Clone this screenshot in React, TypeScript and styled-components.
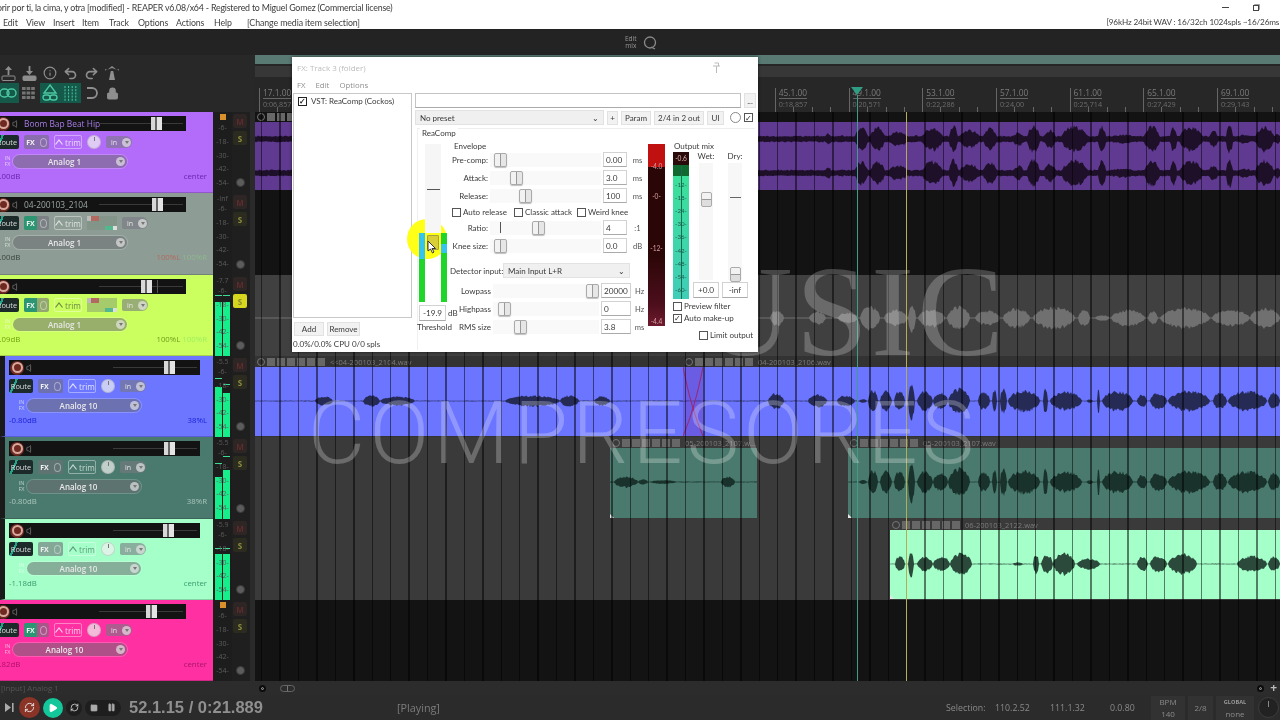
import React, {FC, useMemo} from 'react';
import styled, {createGlobalStyle} from 'styled-components';
import {Info, Lock, Pause, Play, Redo2, RefreshCw, Square, Undo2, Volume} from 'lucide-react';

const UI_FONT = `'Open Sans', 'Noto Sans', sans-serif`;
const CHROME_FONT = `Lato, 'Open Sans', sans-serif`;
const FX_FONT = `Lato, 'Liberation Sans', Arial, sans-serif`;

const GlobalStyle = createGlobalStyle`
    html, body {
        margin: 0;
        background: #222;
    }
    * {
        box-sizing: border-box;
    }
`;

const Page = styled.div`
    position: relative;
    display: flex;
    flex-direction: column;
    width: 1280px;
    height: 720px;
    overflow: hidden;
    background: #262626;
    font-family: ${UI_FONT};
    font-size: 9px;
    filter: blur(0.35px);
`;

/* ---- window chrome ---- */

const TitleBar = styled.div`
    display: flex;
    align-items: center;
    height: 15px;
    background: #fff;
    color: #3a3a3a;
    font-family: ${CHROME_FONT};
    font-size: 8.8px;
    letter-spacing: -0.18px;
    white-space: nowrap;
`;
const TitleText = styled.span`
    margin-left: -3px;
`;
const WindowButtons = styled.div`
    display: flex;
    gap: 24px;
    align-items: center;
    margin-left: auto;
    margin-right: 21px;
`;
const MinimizeGlyph = styled.span`
    width: 7px;
    height: 1px;
    background: #444;
`;
const RestoreGlyph = styled.span`
    width: 6px;
    height: 6px;
    border: 1px solid #444;
    box-shadow: 1px -1px 0 -0.2px #888;
`;
const MenuBar = styled.div`
    display: flex;
    align-items: center;
    height: 15px;
    padding-left: 3px;
    background: #fff;
    color: #3f3f3f;
    font-family: ${CHROME_FONT};
    font-size: 8.8px;
    letter-spacing: -0.1px;
    border-bottom: 1px solid #222;
    white-space: nowrap;
`;
const MenuItem = styled.span<{$width: number}>`
    width: ${p => p.$width}px;
    flex: none;
`;
const AudioStatus = styled.span`
    margin-left: auto;
    margin-right: -3px;
    font-size: 8.2px;
    letter-spacing: -0.15px;
`;
const TopStrip = styled.div`
    display: flex;
    align-items: center;
    height: 25px;
    padding-left: 625px;
    gap: 6px;
    background: #232323;
`;
const EditMix = styled.span`
    color: #999;
    font-size: 6.5px;
    line-height: 6.5px;
    text-align: center;
`;
const Main = styled.div`
    display: flex;
    height: 626px;
`;

/* ---- track control panel ---- */

const LeftPanel = styled.div`
    display: flex;
    flex-direction: column;
    width: 255px;
    flex: none;
    background: #1f1f1f;
`;
const ToolbarArea = styled.div`
    display: grid;
    grid-template-columns: repeat(6, 20.8px);
    grid-auto-rows: 20px;
    align-content: start;
    height: 57px;
    padding-top: 8px;
    margin-left: -2px;
    background: #282828;
    color: #8e8e8e;
`;
const ToolButton = styled.div<{$active?: boolean}>`
    display: flex;
    align-items: center;
    justify-content: center;
    height: 20px;
    background: ${p => (p.$active ? '#14594a' : 'transparent')};
    color: ${p => (p.$active ? '#4cc7a1' : 'inherit')};
`;
const TrackRow = styled.div<{$height: number}>`
    display: flex;
    height: ${p => p.$height}px;
    flex: none;
`;
const TrackHeader = styled.div<{$color: string; $indent: boolean}>`
    width: 213px;
    flex: none;
    overflow: hidden;
    background: ${p => p.$color};
    border-left: ${p => (p.$indent ? '5px solid #1a1a1a' : 'none')};
    border-bottom: 1px solid rgba(0, 0, 0, 0.18);
    padding-left: ${p => (p.$indent ? 4 : 0)}px;
`;
const TrackContent = styled.div<{$indent: boolean}>`
    display: flex;
    flex-direction: column;
    padding-top: 4px;
    margin-left: ${p => (p.$indent ? 0 : -5)}px;
    margin-right: 6px;
`;
const FaderBar = styled.div`
    position: relative;
    display: flex;
    align-items: center;
    gap: 2px;
    width: 191px;
    height: 15px;
    flex: none;
    padding-left: 1px;
    background: #131313;
`;
const RecButton = styled.span`
    width: 14px;
    height: 14px;
    flex: none;
    border-radius: 50%;
    background: #6e2a20;
    display: flex;
    align-items: center;
    justify-content: center;
    &::after {
        content: '';
        width: 7px;
        height: 7px;
        border-radius: 50%;
        border: 2px solid #d9a9a0;
    }
`;
const TrackName = styled.span<{$color: string}>`
    color: ${p => p.$color};
    font-size: 8.4px;
    white-space: nowrap;
`;
const FaderRail = styled.span`
    position: absolute;
    right: 3px;
    top: 7px;
    width: 84px;
    height: 1px;
    background: #3a3a3a;
`;
const FaderThumb = styled.span<{$pos: number}>`
    position: absolute;
    left: ${p => p.$pos}px;
    top: 1px;
    width: 11px;
    height: 13px;
    background: linear-gradient(90deg, #d8d8d8 0 40%, #666 40% 55%, #e4e4e4 55%);
`;
const FaderMark = styled.span`
    position: absolute;
    left: 162px;
    top: 1px;
    width: 1px;
    height: 13px;
    background: #555;
`;
const ControlRow = styled.div`
    display: flex;
    align-items: center;
    gap: 5px;
    height: 14px;
    margin-top: 4px;
    flex: none;
`;
const RouteButton = styled.span`
    display: flex;
    align-items: center;
    justify-content: center;
    width: 24px;
    height: 14px;
    flex: none;
    background: linear-gradient(115deg, #1c2b2a 0 22%, #25a38a 22% 30%, #1c2b2a 30%);
    color: #ddd;
    font-size: 7.4px;
    border-radius: 2px;
`;
const FxButton = styled.span<{$on: boolean}>`
    display: flex;
    width: 25px;
    height: 14px;
    flex: none;
    color: #f2f2f2;
    font-size: 7px;
    font-weight: 700;
    background: rgba(110, 110, 120, 0.6);
    border-radius: 2px;
    overflow: hidden;
    & > span:first-child {
        display: flex;
        align-items: center;
        justify-content: center;
        width: 13px;
        background: ${p => (p.$on ? '#2c9672' : 'transparent')};
    }
    & > span:last-child {
        flex: 1;
        margin: 2.5px;
        border-radius: 50%;
        border: 1px solid rgba(255, 255, 255, 0.4);
    }
`;
const TrimButton = styled.span<{$color: string}>`
    display: flex;
    align-items: center;
    gap: 2px;
    justify-content: center;
    width: 28px;
    height: 14px;
    flex: none;
    border: 1px solid rgba(255, 255, 255, 0.4);
    border-radius: 2px;
    color: ${p => p.$color};
    font-size: 8.2px;
`;
const Knob = styled.span`
    position: relative;
    width: 14px;
    height: 14px;
    flex: none;
    border-radius: 50%;
    background: rgba(240, 240, 240, 0.72);
    border: 1px solid rgba(0, 0, 0, 0.12);
    &::after {
        content: '';
        position: absolute;
        left: 5.5px;
        top: 1px;
        width: 1px;
        height: 4px;
        background: #777;
    }
`;
const DualPan = styled.span`
    display: flex;
    flex-direction: column;
    justify-content: center;
    gap: 5px;
    width: 30px;
    height: 14px;
    flex: none;
    background: rgba(120, 140, 120, 0.45);
    &::before {
        content: '';
        width: 12px;
        height: 5px;
        background: linear-gradient(90deg, #bbb 0 30%, #b26a60 30%);
    }
    &::after {
        content: '';
        align-self: flex-end;
        width: 12px;
        height: 5px;
        background: linear-gradient(90deg, #54b88e 0 70%, #ddd 70%);
    }
`;
const InBadge = styled.span`
    display: flex;
    align-items: center;
    justify-content: space-between;
    width: 26px;
    height: 12px;
    flex: none;
    padding: 0 1px 0 5px;
    background: rgba(120, 120, 130, 0.6);
    border-radius: 2px 7px 7px 2px;
    color: #e4e4e4;
    font-size: 7px;
`;
const DownDot = styled.span`
    display: flex;
    align-items: center;
    justify-content: center;
    width: 9px;
    height: 9px;
    flex: none;
    border-radius: 50%;
    background: rgba(235, 235, 235, 0.65);
    &::after {
        content: '';
        border: 2.5px solid transparent;
        border-top: 3.5px solid #777;
        margin-top: 3px;
    }
`;
const InputRow = styled.div`
    display: flex;
    align-items: center;
    height: 14px;
    margin-top: 5px;
    flex: none;
`;
const InFxTag = styled.span`
    width: 11px;
    flex: none;
    margin-left: 7px;
    color: rgba(255, 255, 255, 0.6);
    font-size: 5.5px;
    line-height: 6px;
    text-align: center;
`;
const InputPill = styled.span`
    display: flex;
    align-items: center;
    width: 114px;
    height: 13px;
    padding-right: 2px;
    border-radius: 7px;
    background: rgba(110, 110, 115, 0.55);
    box-shadow: 0 0 0 1px rgba(255, 255, 255, 0.2);
    color: #e8e8e8;
    font-size: 8px;
    font-weight: 600;
    & > span:first-child {
        flex: 1;
        text-align: center;
    }
`;
const ReadoutRow = styled.div`
    display: flex;
    justify-content: space-between;
    gap: 3px;
    margin-top: 3px;
    font-size: 7.8px;
`;
const Readout = styled.span<{$color: string}>`
    color: ${p => p.$color};
`;
const MeterCell = styled.div`
    position: relative;
    display: flex;
    flex-direction: column;
    align-items: center;
    width: 19px;
    flex: none;
    background: #1d1d1d;
    overflow: hidden;
`;
const MeterTop = styled.span`
    position: relative;
    z-index: 1;
    display: flex;
    align-items: center;
    justify-content: center;
    height: 8px;
    margin-top: 1px;
    color: #5a5a5a;
    font-size: 7px;
`;
const MeterLabel = styled.span`
    position: relative;
    z-index: 1;
    display: flex;
    align-items: center;
    height: 13.7px;
    flex: none;
    color: #5d5d5d;
    font-size: 7px;
`;
const ClipSquare = styled.span`
    width: 6px;
    height: 6px;
    background: #d8902c;
`;
const MeterBar = styled.span<{$side: 'left' | 'right'; $top: number}>`
    position: absolute;
    ${p => p.$side}: 2px;
    top: ${p => p.$top}px;
    bottom: 0;
    width: 7px;
    background: #16ee8c;
`;
const MeterTick = styled.span<{$side: 'left' | 'right'; $top: number}>`
    position: absolute;
    ${p => p.$side}: 2px;
    top: ${p => p.$top}px;
    width: 7px;
    height: 1px;
    background: #3bdc94;
`;
const MuteColumn = styled.div`
    display: flex;
    flex-direction: column;
    align-items: flex-start;
    gap: 3px;
    width: 23px;
    flex: none;
    padding: 2px 0 6px 1px;
    background: #1f1f1f;
    border-right: 5px solid #2a2a2a;
`;
const MuteButton = styled.span<{$tone: 'mute' | 'solo' | 'soloOn'}>`
    display: flex;
    align-items: center;
    justify-content: center;
    width: 14px;
    height: 14px;
    border-radius: 2px;
    font-size: 8px;
    font-weight: 700;
    background: ${p => (p.$tone === 'soloOn' ? '#d6d61e' : p.$tone === 'solo' ? '#2b2b20' : '#2e2525')};
    color: ${p => (p.$tone === 'soloOn' ? '#8a8a30' : p.$tone === 'solo' ? '#8d8d3e' : '#5e2c2c')};
`;
const PhaseButton = styled.span`
    width: 9px;
    height: 9px;
    margin: auto 0 0 2.5px;
    border-radius: 50%;
    background: #5c5c5c;
    border: 1.5px solid #3a3a3a;
`;

/* ---- arrange view ---- */

const Arrange = styled.div`
    position: relative;
    display: flex;
    flex-direction: column;
    flex: 1;
    min-width: 0;
    overflow: hidden;
`;
const TealStrip = styled.div`
    height: 9px;
    flex: none;
    background: #587a72;
`;
const ScrollStrip = styled.div`
    height: 11px;
    margin-top: 2px;
    flex: none;
    background: #373737;
`;
const Ruler = styled.div`
    display: flex;
    height: 35px;
    flex: none;
    padding: 11px 0 0 4px;
    background: #272727;
`;
const RulerMark = styled.div`
    width: 73.7px;
    height: 24px;
    flex: none;
    padding: 0 0 0 3px;
    border-left: 1px solid #666;
    background: repeating-linear-gradient(90deg, transparent 0 17.43px, #666 17.43px 18.43px) bottom left / 100% 5px no-repeat;
`;
const BarLabel = styled.div`
    width: fit-content;
    color: #7b7b7b;
    font-size: 8.4px;
    line-height: 10px;
    border-bottom: 1px solid #666;
`;
const TimeLabel = styled.div`
    color: #6c6c6c;
    font-size: 7.2px;
    line-height: 10px;
`;
const Lanes = styled.div`
    position: relative;
    flex: 1;
`;
const Lane = styled.div<{$height: number; $bg: string}>`
    position: relative;
    height: ${p => p.$height}px;
    background: ${p => p.$bg};
`;
const Clip = styled.div<{$left: number; $width: number}>`
    position: absolute;
    top: 0;
    left: ${p => p.$left}px;
    width: ${p => p.$width}px;
    display: flex;
    flex-direction: column;
`;
const ClipHeader = styled.div<{$height: number}>`
    display: flex;
    align-items: center;
    height: ${p => p.$height}px;
    padding-left: 2px;
    color: #7c7c7c;
    font-size: 7.5px;
    white-space: nowrap;
`;
const ClipPower = styled.span`
    width: 8px;
    height: 8px;
    margin-right: 2px;
    flex: none;
    border-radius: 50%;
    border: 1px solid #777;
`;
const ClipBox = styled.span`
    width: 8px;
    height: 8px;
    margin-right: 2px;
    flex: none;
    background: #676767;
`;
const ClipName = styled.span`
    margin-left: 3px;
`;
const ClipBody = styled.div<{$height: number; $color: string; $corner?: boolean}>`
    position: relative;
    height: ${p => p.$height}px;
    background: ${p => p.$color};
    ${p =>
        p.$corner &&
        `&::after {
            content: '';
            position: absolute;
            left: 0;
            bottom: 0;
            border: 2.5px solid transparent;
            border-left-color: #e8e8e8;
            border-bottom-color: #e8e8e8;
        }`}
`;
const WaveSvg = styled.svg`
    display: block;
    width: 100%;
    height: 100%;
`;
const Crossfade = styled.svg`
    position: absolute;
    left: 428px;
    top: 11px;
`;
const GridLines = styled.div`
    position: absolute;
    inset: 0;
    pointer-events: none;
    background: repeating-linear-gradient(90deg, rgba(0, 0, 0, 0.5) 0 1.4px, transparent 1.4px 18.43px) 6px 0;
`;
const Cursor = styled.div<{$left: number; $top: number; $color: string}>`
    position: absolute;
    top: ${p => p.$top}px;
    bottom: 0;
    left: ${p => p.$left}px;
    width: 1px;
    background: ${p => p.$color};
`;
const PlayheadCap = styled.div`
    position: absolute;
    top: 32px;
    left: 596px;
    border: 6px solid transparent;
    border-top: 8px solid #2f9d82;
    border-bottom: 0;
`;

/* ---- watermark ---- */

const Watermark = styled.div<{$serif?: boolean}>`
    position: absolute;
    white-space: nowrap;
    pointer-events: none;
    ${p =>
        p.$serif
            ? `right: 273px; top: 236px; color: rgba(255, 255, 255, 0.22); font: 400 130px 'Liberation Serif', serif; line-height: 150px; letter-spacing: 3px;`
            : `left: 308px; top: 378px; color: rgba(255, 255, 255, 0.25); font: 300 88px Roboto, sans-serif; line-height: 110px; letter-spacing: 4.3px;`}
`;

/* ---- FX window ---- */

const FxWindow = styled.div`
    position: absolute;
    left: 292px;
    top: 57px;
    display: flex;
    flex-direction: column;
    width: 466px;
    height: 295px;
    background: #fff;
    color: #3a3a3a;
    font-family: ${FX_FONT};
    font-size: 8px;
    box-shadow: 0 0 3px rgba(0, 0, 0, 0.6);
`;
const FxTitle = styled.div`
    display: flex;
    align-items: center;
    justify-content: space-between;
    height: 20px;
    flex: none;
    padding: 0 37px 0 5px;
    color: #bcbcbc;
    font-family: ${UI_FONT};
    font-size: 8px;
`;
const FxMenu = styled.div`
    display: flex;
    gap: 10px;
    align-items: center;
    height: 15px;
    flex: none;
    padding-left: 5px;
    color: #8f8f8f;
    font-family: ${UI_FONT};
    font-size: 7.8px;
`;
const FxBody = styled.div`
    display: flex;
    flex: 1;
    padding: 1px 0 0 1px;
`;
const FxListColumn = styled.div`
    display: flex;
    flex-direction: column;
    width: 119px;
    flex: none;
`;
const FxList = styled.div`
    height: 225px;
    flex: none;
    padding: 2px 4px;
    border: 1px solid #c8c8c8;
`;
const FxListItem = styled.div`
    display: flex;
    align-items: center;
    gap: 4px;
    white-space: nowrap;
`;
const CheckBox = styled.span<{$strong?: boolean}>`
    display: inline-flex;
    align-items: center;
    justify-content: center;
    width: 9px;
    height: 9px;
    flex: none;
    border: 1px solid ${p => (p.$strong ? '#222' : '#555')};
    color: #222;
    font-size: 8px;
    line-height: 8px;
    font-weight: ${p => (p.$strong ? 700 : 400)};
    background: #fff;
`;
const FxListButtons = styled.div`
    display: flex;
    gap: 3px;
    margin-top: 4px;
    padding-left: 1px;
`;
const PlainButton = styled.span<{$width: number; $height?: number}>`
    display: flex;
    align-items: center;
    justify-content: center;
    width: ${p => p.$width}px;
    height: ${p => p.$height ?? 14}px;
    flex: none;
    background: #f2f2f2;
    border: 1px solid #e2e2e2;
    white-space: nowrap;
`;
const CpuText = styled.div`
    margin-top: 3px;
    white-space: nowrap;
`;
const FxMain = styled.div`
    display: flex;
    flex-direction: column;
    flex: 1;
    min-width: 0;
    padding-left: 3px;
`;
const PresetNameRow = styled.div`
    display: flex;
    gap: 3px;
    height: 15px;
`;
const PresetName = styled.div`
    width: 326px;
    flex: none;
    border: 1px solid #c4c4c4;
    border-bottom-color: #aaa;
`;
const PresetToolbar = styled.div`
    display: flex;
    align-items: center;
    gap: 3px;
    height: 15px;
    margin-top: 2px;
`;
const SelectBox = styled.span<{$width: number}>`
    display: flex;
    align-items: center;
    justify-content: space-between;
    width: ${p => p.$width}px;
    height: 15px;
    flex: none;
    padding: 0 4px;
    background: #f0f0f0;
    border: 1px solid #e2e2e2;
    white-space: nowrap;
`;
const MiniKnob = styled.span`
    width: 11px;
    height: 11px;
    margin-left: 3px;
    flex: none;
    border-radius: 50%;
    border: 1px solid #888;
`;
const PluginPanel = styled.div`
    position: relative;
    display: flex;
    width: 338px;
    height: 222px;
    margin: 3px 0 0 2px;
    padding: 11px 0 0 1px;
    border-top: 1px solid #eee;
    border-left: 1px solid #f0f0f0;
`;
const PanelTitle = styled.span`
    position: absolute;
    top: -1px;
    left: 2px;
    padding: 0 2px;
    background: #fff;
`;
const ThresholdColumn = styled.div`
    position: relative;
    z-index: 2;
    display: flex;
    flex-direction: column;
    width: 28px;
    flex: none;
    margin-top: 4px;
`;
const ThresholdMeter = styled.div`
    position: relative;
    display: flex;
    align-items: flex-end;
    height: 158px;
    flex: none;
`;
const Highlight = styled.span`
    position: absolute;
    left: -12px;
    top: 75px;
    width: 40px;
    height: 40px;
    border-radius: 50%;
    background: #ffff17;
`;
const ThresholdBar = styled.span<{$fill: string}>`
    position: relative;
    width: 6px;
    height: 69px;
    flex: none;
    background: ${p => p.$fill};
`;
const ThresholdTrough = styled.span`
    position: relative;
    flex: 1;
    align-self: stretch;
    &::before {
        content: '';
        position: absolute;
        inset: 0 0 69px 0;
        background: #f6f6f6;
    }
    &::after {
        content: '';
        position: absolute;
        left: 2px;
        right: 1px;
        top: 45px;
        height: 1px;
        background: #555;
    }
`;
const ThresholdThumb = styled.span`
    position: absolute;
    left: 2px;
    right: 2px;
    top: 91px;
    height: 15px;
    background: #d8cf38;
    border: 1px solid #a8a040;
    border-radius: 1px;
`;
const CursorArrow = styled.svg`
    position: absolute;
    left: 8px;
    top: 96px;
`;
const ThresholdValue = styled.div`
    display: flex;
    align-items: center;
    gap: 2px;
    margin-top: 3px;
    white-space: nowrap;
`;
const ValueBox = styled.span<{$width: number; $center?: boolean; $height?: number}>`
    display: flex;
    align-items: center;
    justify-content: ${p => (p.$center ? 'center' : 'flex-start')};
    width: ${p => p.$width}px;
    height: ${p => p.$height ?? 15}px;
    flex: none;
    padding: 0 2px;
    border: 1px solid #d2d2d2;
    border-bottom-color: #aaa;
    background: #fff;
    font-size: 8.2px;
`;
const ThresholdLabel = styled.div`
    margin: 1px 0 0 -2px;
    white-space: nowrap;
`;
const MainColumn = styled.div`
    display: flex;
    flex-direction: column;
    width: 195px;
    flex: none;
    margin-left: 3px;
`;
const EnvelopeTitle = styled.div`
    height: 12px;
    padding: 1px 0 0 4px;
`;
const ParamRow = styled.div<{$label: number; $track: number}>`
    display: grid;
    grid-template-columns: ${p => p.$label}px ${p => p.$track}px auto auto;
    align-items: center;
    column-gap: 2px;
    height: 15px;
    margin-bottom: 3px;
`;
const ParamLabel = styled.span`
    text-align: right;
    white-space: nowrap;
`;
const SliderTrack = styled.span`
    position: relative;
    height: 14px;
    background: #f9f9f9;
`;
const SliderThumb = styled.span<{$pos: number}>`
    position: absolute;
    left: ${p => p.$pos - 6}px;
    top: 0;
    width: 13px;
    height: 14px;
    border: 1px solid #aaa;
    border-radius: 2px;
    background: linear-gradient(90deg, #f2f2f2 0 48%, #999 48% 56%, #e6e6e6 56%);
    box-shadow: 0 1px 1px rgba(0, 0, 0, 0.25);
`;
const RatioTick = styled.span`
    position: absolute;
    left: 10px;
    top: 1px;
    width: 1px;
    height: 11px;
    background: #555;
`;
const Unit = styled.span`
    margin-left: 1px;
    font-size: 7.6px;
    color: #555;
`;
const ChecksRow = styled.div`
    display: flex;
    align-items: center;
    height: 14px;
    margin: -1px 0 1px 2px;
`;
const CheckLabel = styled.label<{$width?: number}>`
    display: flex;
    align-items: center;
    gap: 2px;
    height: 12px;
    ${p => (p.$width ? `width: ${p.$width}px; flex: none;` : '')}
    white-space: nowrap;
`;
const DetectorRow = styled.div`
    display: flex;
    align-items: center;
    height: 15px;
    margin: 7px 0 5px;
`;
const DetectorLabel = styled.span`
    width: 53px;
    flex: none;
    white-space: nowrap;
`;
const ReductionMeter = styled.div`
    position: relative;
    display: flex;
    flex-direction: column;
    align-items: center;
    justify-content: space-between;
    width: 17px;
    height: 182px;
    flex: none;
    margin: 4px 0 0 3px;
    color: #d8a0a0;
    font-size: 6.6px;
    background: linear-gradient(#c11010 0 23px, #2a0606 23px 60%, #4c0e1c 88%, #6d1b2e 100%);
`;
const MeterValue = styled.span<{$top: number}>`
    position: absolute;
    top: ${p => p.$top}px;
`;
const OutputColumn = styled.div`
    display: flex;
    flex-direction: column;
    width: 85px;
    flex: none;
    margin-left: 5px;
`;
const OutputTitle = styled.div`
    height: 12px;
    padding: 1px 0 0 4px;
`;
const OutputBody = styled.div`
    display: flex;
    gap: 4px;
    padding-left: 3px;
`;
const OutputMeter = styled.div`
    position: relative;
    display: flex;
    flex-direction: column;
    align-items: center;
    width: 16px;
    height: 147px;
    flex: none;
    color: #1d5a4a;
    font-size: 6.2px;
    background: linear-gradient(#2a0a0a 0 13px, #0f6a30 13px 24px, #3be09a 24px, #40cdb8 100%);
    &::before {
        content: '';
        position: absolute;
        left: 7.5px;
        top: 14px;
        bottom: 0;
        width: 1px;
        background: #1d6a50;
    }
`;
const OutputPeak = styled.span`
    height: 13px;
    color: #e0b0b0;
    font-size: 6.6px;
    line-height: 13px;
`;
const OutputTick = styled.span`
    position: relative;
    height: 13.1px;
    line-height: 13px;
    &:first-of-type {
        margin-top: 5px;
    }
`;
const MixChannels = styled.div`
    display: flex;
    gap: 3px;
`;
const MixChannel = styled.div`
    display: flex;
    flex-direction: column;
    align-items: center;
    width: 26px;
`;
const MixLabel = styled.span`
    height: 11px;
    line-height: 9px;
`;
const MixTrough = styled.div`
    position: relative;
    width: 14px;
    height: 117px;
    margin-bottom: 2px;
    background: #f7f7f7;
`;
const MixThumb = styled.span<{$top: number}>`
    position: absolute;
    left: 2px;
    right: 1px;
    top: ${p => p.$top}px;
    height: 15px;
    border: 1px solid #aaa;
    border-radius: 2px;
    background: linear-gradient(#f2f2f2 0 45%, #999 45% 55%, #dedede 55%);
`;
const MixDash = styled.span`
    position: absolute;
    left: 2px;
    right: 1px;
    top: 34px;
    height: 1px;
    background: #666;
`;
const OutputChecks = styled.div`
    display: flex;
    flex-direction: column;
    padding: 1px 0 0 3px;
`;
const LimitCheck = styled.div`
    margin: 5px 0 0 26px;
`;

/* ---- bottom bars ---- */

const StatusRow = styled.div`
    display: flex;
    align-items: center;
    height: 14px;
    flex: none;
    background: #2c2c2c;
    color: #555;
    font-size: 7.8px;
`;
const StatusText = styled.span`
    width: 258px;
    flex: none;
    margin-left: 1px;
`;
const TinyDot = styled.span`
    width: 7px;
    height: 7px;
    border-radius: 50%;
    background: #0c0c0c;
    border: 2px solid #0c0c0c;
    box-shadow: inset 0 0 0 1px #999;
`;
const TinyOval = styled.span`
    width: 15px;
    height: 7px;
    margin-left: 14px;
    border-radius: 4px;
    border: 1px solid #666;
    background: linear-gradient(90deg, transparent 0 45%, #777 45% 55%, transparent 55%);
`;
const StatusRight = styled.span`
    display: flex;
    align-items: center;
    gap: 6px;
    margin-left: auto;
    margin-right: 3px;
    color: #bbb;
    font-size: 12px;
    font-weight: 700;
    line-height: 10px;
`;
const Transport = styled.div`
    display: flex;
    align-items: center;
    height: 25px;
    flex: none;
    background: #2b2b2b;
    color: #888;
`;
const SkipIcon = styled.span`
    display: flex;
    width: 19px;
    flex: none;
    justify-content: center;
    color: #aaa;
`;
const RoundButton = styled.span<{$bg: string; $size: number}>`
    display: flex;
    align-items: center;
    justify-content: center;
    width: ${p => p.$size}px;
    height: ${p => p.$size}px;
    margin-right: 3px;
    flex: none;
    border-radius: 50%;
    background: ${p => p.$bg};
    color: #e8e8e8;
`;
const StopPause = styled.span`
    display: flex;
    align-items: center;
    justify-content: space-around;
    width: 36px;
    height: 16px;
    flex: none;
    border-radius: 8px;
    background: #1e1e1e;
    color: #aaa;
`;
const Clock = styled.span`
    margin-left: 8px;
    width: 268px;
    flex: none;
    color: #8f8f8f;
    font: 700 16.5px 'Liberation Sans', Arial, sans-serif;
    white-space: nowrap;
`;
const PlayState = styled.span`
    color: #7c7c7c;
    font-size: 10.8px;
`;
const TransportRight = styled.div`
    display: flex;
    align-items: center;
    margin-left: auto;
    padding-right: 1px;
`;
const SelectionCell = styled.span<{$width: number}>`
    width: ${p => p.$width}px;
    flex: none;
    color: #8a8a8a;
    font-size: 8.8px;
    white-space: nowrap;
`;
const InfoBox = styled.span<{$width: number}>`
    display: flex;
    flex-direction: column;
    align-items: center;
    justify-content: center;
    gap: 4px;
    width: ${p => p.$width}px;
    height: 24px;
    margin-right: 3px;
    flex: none;
    background: #323232;
    color: #8a8a8a;
    font-size: 8px;
    line-height: 8px;
`;
const GlobalLabel = styled.span`
    color: #999;
    font-size: 5.6px;
    font-weight: 700;
`;
const BigKnob = styled.span`
    position: relative;
    width: 21px;
    height: 21px;
    margin-left: 1px;
    flex: none;
    border-radius: 50%;
    background: #222;
    border: 1px solid #3d3d3d;
    &::after {
        content: '';
        position: absolute;
        left: 9px;
        top: 3px;
        width: 1px;
        height: 6px;
        background: #888;
    }
`;

/* ---- data ---- */

type Bump = [number, number, number];

type TrackData = {
    name?: string;
    color: string;
    nameColor: string;
    indent: boolean;
    fader: number;
    mark?: boolean;
    dual?: boolean;
    fxOn?: boolean;
    trimColor: string;
    input: string;
    volume: string;
    readoutColor: string;
    pan: {text: string; color: string}[];
    top?: string;
    clip?: boolean;
    solo?: boolean;
    meter?: {left: number; right: number; tickL: number; tickR: number};
};

const TRACKS: TrackData[] = [
    {name: 'Boom Bap Beat Hip', color: '#b36bf9', nameColor: '#a87ce8', indent: false, fader: 156, trimColor: '#eadcff', input: 'Analog 1', volume: '0.00dB', readoutColor: '#6a24b0', pan: [{text: 'center', color: '#6a24b0'}], clip: true},
    {name: '04-200103_2104', color: '#8d9c95', nameColor: '#9aa8a2', indent: false, fader: 157, dual: true, fxOn: true, trimColor: '#dce3df', input: 'Analog 1', volume: '0.00dB', readoutColor: '#39453f', pan: [{text: '100%L', color: '#b26a5e'}, {text: '100%R', color: '#8fb98e'}], top: '-Inf'},
    {color: '#cbff5f', nameColor: '#999', indent: false, fader: 146, mark: true, dual: true, fxOn: true, trimColor: '#6c8a45', input: 'Analog 1', volume: '7.09dB', readoutColor: '#6da30e', pan: [{text: '100%L', color: '#6f9a1c'}, {text: '100%R', color: '#9cef5f'}], top: '-7.7', solo: true, meter: {left: 27, right: 27, tickL: 20, tickR: 20}},
    {color: '#6c76ff', nameColor: '#999', indent: true, fader: 155, trimColor: '#dfe2ff', input: 'Analog 10', volume: '-0.80dB', readoutColor: '#1c22d8', pan: [{text: '38%L', color: '#1c22d8'}], top: '-5.5', meter: {left: 31, right: 37, tickL: 22, tickR: 28}},
    {color: '#4a7a6d', nameColor: '#999', indent: true, fader: 155, trimColor: '#c5d8d2', input: 'Analog 10', volume: '-0.80dB', readoutColor: '#aac5bd', pan: [{text: '38%R', color: '#aac5bd'}], top: '-5.5', meter: {left: 40, right: 33, tickL: 26, tickR: 19}},
    {color: '#a4ffc9', nameColor: '#999', indent: true, fader: 154, trimColor: '#5f9a7d', input: 'Analog 10', volume: '-1.18dB', readoutColor: '#3c9c6e', pan: [{text: 'center', color: '#3c9c6e'}], top: '-5.9', meter: {left: 35, right: 35, tickL: 29, tickR: 29}},
    {color: '#ff30a2', nameColor: '#999', indent: false, fader: 151, fxOn: true, trimColor: '#ffd0ea', input: 'Analog 10', volume: '8.82dB', readoutColor: '#b0106c', pan: [{text: 'center', color: '#a8146a'}], clip: true},
];

const LANE_HEIGHTS = [81, 82, 81, 81, 82, 81, 81];
const RULER_STEP_BARS = 4;
const RULER_MARKS = Array.from({length: 14}, (_, i) => {
    const bar = 17 + i * RULER_STEP_BARS;
    const seconds = ((bar - 1) * 60) / 140;
    const secText = (seconds % 60).toFixed(3).replace(/^(\d)\./, '0$1.').replace(/(\.\d\d)0$/, '$1');
    return {bar: `${bar}.1.00`, time: `0:${secText}`};
});

const PHRASE: Bump[] = [
    [808, 827, 7], [837, 855, 6], [859, 867, 2], [868, 878, 12], [880, 892, 11], [894, 905, 11], [908, 915, 20],
    [917, 933, 11], [933, 948, 9], [948, 970, 14], [978, 990, 10], [992, 997, 13], [1000, 1007, 14], [1008, 1040, 12],
    [1043, 1048, 14], [1050, 1082, 10], [1087, 1093, 2], [1097, 1100, 14], [1102, 1133, 11], [1137, 1147, 7],
    [1150, 1167, 9], [1168, 1210, 11], [1213, 1227, 9], [1228, 1267, 11], [1268, 1280, 9],
];
const BLUE_WAVE: Bump[] = [[315, 333, 5], [363, 380, 6], [380, 415, 5], [505, 560, 6], [560, 579, 6], [594, 610, 5], [768, 784, 9], ...PHRASE];
const TEAL_A: Bump[] = [[614, 638, 6], [638, 648, 3], [650, 677, 2], [721, 735, 6]];
const TEAL_B: Bump[] = PHRASE.slice(2).map(([s, e, a]) => [s, e, a * 1.1]);
const MINT_WAVE: Bump[] = [
    [895, 905, 9], [908, 914, 14], [917, 933, 8], [933, 950, 8], [950, 972, 12], [1013, 1023, 2], [1033, 1039, 11],
    [1041, 1053, 10], [1053, 1075, 12], [1077, 1100, 6], [1137, 1148, 8], [1150, 1167, 9], [1168, 1197, 11],
    [1237, 1267, 9], [1268, 1280, 8],
];
const PURPLE_WAVE: Bump[] = [
    [825, 832, 6], [840, 845, 4], [855, 868, 13], [870, 885, 13], [887, 909, 8], [909, 922, 4], [922, 943, 13],
    [949, 958, 15], [959, 980, 10], [983, 997, 12], [1013, 1024, 8], [1027, 1040, 15], [1044, 1056, 10], [1061, 1088, 14],
    [1098, 1106, 14], [1108, 1138, 5], [1144, 1160, 14], [1170, 1177, 14], [1179, 1203, 13], [1209, 1218, 9],
    [1226, 1233, 16], [1236, 1253, 5], [1255, 1274, 14], [1274, 1280, 6],
];
const GRAY_WAVE: Bump[] = [
    [770, 784, 9], [809, 826, 7], [838, 858, 6], [860, 880, 13], [884, 908, 9], [908, 916, 15], [918, 945, 10],
    [947, 970, 13], [975, 1000, 8], [1003, 1030, 11], [1033, 1075, 12], [1078, 1090, 9], [1095, 1110, 3], [1111, 1145, 9],
    [1148, 1158, 7], [1160, 1210, 11], [1212, 1250, 9], [1250, 1280, 11],
];

const noise = (x: number, seed: number) => {
    const v = Math.sin(x * 12.9898 + seed * 78.233) * 43758.5453;
    return v - Math.floor(v);
};

const wavePath = (bumps: Bump[], x0: number, x1: number, cy: number, base: number, seed: number) => {
    const top: string[] = [];
    const bottom: string[] = [];
    for (let x = x0; x <= x1; x += 1) {
        let amp = base;
        for (const [s, e, a] of bumps) {
            if (x >= s && x <= e) {
                const arc = Math.max(0, Math.sin((Math.PI * (x - s)) / (e - s)));
                amp = Math.max(amp, a * Math.pow(arc, 0.55));
            }
        }
        top.push(`${x} ${(cy - amp * (0.65 + 0.35 * noise(x, seed))).toFixed(1)}`);
        bottom.unshift(`${x} ${(cy + amp * (0.65 + 0.35 * noise(x + 0.5, seed))).toFixed(1)}`);
    }
    return `M${top.join('L')}L${bottom.join('L')}Z`;
};

const Waveform: FC<{
    bumps: Bump[];
    x0: number;
    width: number;
    height: number;
    centers: number[];
    color: string;
    base?: number;
}> = ({bumps, x0, width, height, centers, color, base = 0.4}) => {
    const paths = useMemo(
        () => centers.map((c, i) => wavePath(bumps, x0, x0 + width, c, base, i + 1)),
        [bumps, x0, width, centers, base],
    );
    return (
        <WaveSvg viewBox={`${x0} 0 ${width} ${height}`} preserveAspectRatio="none">
            {paths.map((d, i) => (
                <path key={i} d={d} fill={color} />
            ))}
        </WaveSvg>
    );
};

/* ---- pieces ---- */

const ClipHead: FC<{name?: string; height: number}> = ({name, height}) => (
    <ClipHeader $height={height}>
        <ClipPower />
        {[0, 1, 2, 3, 4, 5].map(i => (
            <ClipBox key={i} />
        ))}
        {name && <ClipName>{name}</ClipName>}
    </ClipHeader>
);

const ToolGlyph: FC<{kind: string}> = ({kind}) => {
    if (kind === 'up' || kind === 'down') {
        return (
            <svg width="15" height="15" viewBox="0 0 15 15" fill="currentColor">
                <path d={kind === 'up' ? 'M7.5 0 L11 4 H8.4 V9 H6.6 V4 H4 Z' : 'M6.6 0 H8.4 V5 H11 L7.5 9 L4 5 H6.6 Z'} />
                <rect x="1" y="10" width="13" height="4.5" rx="1" fill={kind === 'up' ? 'none' : 'currentColor'} stroke="currentColor" />
            </svg>
        );
    }
    if (kind === 'metro') {
        return (
            <svg width="16" height="15" viewBox="0 0 16 15" fill="currentColor">
                <path d="M8 0 L3 4 L1 3 L1 4.5 L8 2 L15 4.5 L15 3 L13 4 Z" />
                <path d="M5 14 L6.8 5 H9.2 L11 14 Z" />
            </svg>
        );
    }
    if (kind === 'link') {
        return (
            <svg width="18" height="12" viewBox="0 0 18 12" fill="none" stroke="currentColor" strokeWidth="1.5">
                <rect x="1" y="2" width="9" height="8" rx="4" />
                <rect x="8" y="2" width="9" height="8" rx="4" />
            </svg>
        );
    }
    if (kind === 'dots') {
        return (
            <svg width="14" height="14" viewBox="0 0 14 14" fill="currentColor" opacity="0.75">
                {[1, 5.5, 10].flatMap(y => [0, 4.6, 9.2].map(x => <rect key={`${x}-${y}`} x={x} y={y} width="3.6" height="3" />))}
            </svg>
        );
    }
    if (kind === 'snap') {
        return (
            <svg width="16" height="18" viewBox="0 0 16 18" fill="none" stroke="currentColor" strokeWidth="1.4">
                <path d="M8 1 L14 9 H2 Z" />
                <rect x="1" y="11" width="7" height="5" rx="2.5" />
                <rect x="8" y="11" width="7" height="5" rx="2.5" />
            </svg>
        );
    }
    if (kind === 'grid') {
        return (
            <svg width="15" height="15" viewBox="0 0 15 15" stroke="currentColor" strokeWidth="1" strokeDasharray="2 1.2">
                <path d="M2 0 V15 M5.6 0 V15 M9.2 0 V15 M12.8 0 V15" />
            </svg>
        );
    }
    return (
        <svg width="14" height="14" viewBox="0 0 14 14" fill="none" stroke="currentColor" strokeWidth="1.8">
            <path d="M2 2 H7 A5 5 0 0 1 7 12 H2" />
        </svg>
    );
};

const TrackStrip: FC<{track: TrackData; height: number}> = ({track, height}) => (
    <TrackRow $height={height}>
        <TrackHeader $color={track.color} $indent={track.indent}>
            <TrackContent $indent={track.indent}>
                <FaderBar>
                    <RecButton />
                    <Volume size={10} color="#888" strokeWidth={1.6} />
                    {track.name && <TrackName $color={track.nameColor}>{track.name}</TrackName>}
                    <FaderRail />
                    {track.mark && <FaderMark />}
                    <FaderThumb $pos={track.fader} />
                </FaderBar>
                <ControlRow>
                    <RouteButton>Route</RouteButton>
                    <FxButton $on={!!track.fxOn}>
                        <span>FX</span>
                        <span />
                    </FxButton>
                    <TrimButton $color={track.trimColor}>
                        <svg width="8" height="6" viewBox="0 0 8 6" fill="none" stroke="currentColor" strokeWidth="1.2">
                            <path d="M0.5 5.5 L4 1 L7.5 5.5" />
                        </svg>
                        trim
                    </TrimButton>
                    {track.dual ? <DualPan /> : <Knob />}
                    <InBadge>
                        in
                        <DownDot />
                    </InBadge>
                </ControlRow>
                <InputRow>
                    <InFxTag>
                        IN
                        <br />
                        FX
                    </InFxTag>
                    <InputPill>
                        <span>{track.input}</span>
                        <DownDot />
                    </InputPill>
                </InputRow>
                <ReadoutRow>
                    <Readout $color={track.readoutColor}>{track.volume}</Readout>
                    <span>
                        {track.pan.map(p => (
                            <Readout key={p.text} $color={p.color}>
                                {p.text}{' '}
                            </Readout>
                        ))}
                    </span>
                </ReadoutRow>
            </TrackContent>
        </TrackHeader>
        <MeterCell>
            {track.meter && (
                <>
                    <MeterBar $side="left" $top={track.meter.left} />
                    <MeterBar $side="right" $top={track.meter.right} />
                    <MeterTick $side="left" $top={track.meter.tickL} />
                    <MeterTick $side="right" $top={track.meter.tickR} />
                </>
            )}
            <MeterTop>{track.clip ? <ClipSquare /> : track.top}</MeterTop>
            {['-6-', '-18-', '-30-', '-42-', '-54-'].map(l => (
                <MeterLabel key={l}>{l}</MeterLabel>
            ))}
        </MeterCell>
        <MuteColumn>
            <MuteButton $tone="mute">M</MuteButton>
            <MuteButton $tone={track.solo ? 'soloOn' : 'solo'}>S</MuteButton>
            <PhaseButton />
        </MuteColumn>
    </TrackRow>
);

const Slider: FC<{label: string; labelWidth: number; track: number; pos: number; value: string; unit: string; valueWidth: number; tick?: boolean}> = ({
    label,
    labelWidth,
    track,
    pos,
    value,
    unit,
    valueWidth,
    tick,
}) => (
    <ParamRow $label={labelWidth} $track={track}>
        <ParamLabel>{label}</ParamLabel>
        <SliderTrack>
            {tick && <RatioTick />}
            <SliderThumb $pos={pos} />
        </SliderTrack>
        <ValueBox $width={valueWidth}>{value}</ValueBox>
        <Unit>{unit}</Unit>
    </ParamRow>
);

const Check: FC<{label: string; checked?: boolean; width?: number}> = ({label, checked, width}) => (
    <CheckLabel $width={width}>
        <CheckBox>{checked ? '✓' : ''}</CheckBox>
        {label}
    </CheckLabel>
);

const ReaComp: FC = () => (
    <PluginPanel>
        <PanelTitle>ReaComp</PanelTitle>
        <ThresholdColumn>
            <ThresholdMeter>
                <Highlight />
                <ThresholdBar $fill="linear-gradient(#35c4ee 0 26px, #1fd52a 26px)" />
                <ThresholdTrough>
                    <ThresholdThumb />
                </ThresholdTrough>
                <ThresholdBar $fill="linear-gradient(#1fd52a 0 11px, #35c4ee 11px 20px, #1fd52a 20px)" />
                <CursorArrow width="10" height="14" viewBox="0 0 10 14">
                    <path d="M1 1 V11 L3.5 9 L5.5 13 L7 12 L5 8.5 H8.5 Z" fill="#fff" stroke="#222" strokeWidth="0.9" />
                </CursorArrow>
            </ThresholdMeter>
            <ThresholdValue>
                <ValueBox $width={27} $height={16} $center>
                    -19.9
                </ValueBox>
                dB
            </ThresholdValue>
            <ThresholdLabel>Threshold</ThresholdLabel>
        </ThresholdColumn>
        <MainColumn>
            <EnvelopeTitle>Envelope</EnvelopeTitle>
            <Slider label="Pre-comp:" labelWidth={38} track={111} pos={10} value="0.00" unit="ms" valueWidth={24} />
            <Slider label="Attack:" labelWidth={38} track={111} pos={26} value="3.0" unit="ms" valueWidth={24} />
            <Slider label="Release:" labelWidth={38} track={111} pos={35} value="100" unit="ms" valueWidth={24} />
            <ChecksRow>
                <Check label="Auto release" width={62} />
                <Check label="Classic attack" width={63} />
                <Check label="Weird knee" />
            </ChecksRow>
            <Slider label="Ratio:" labelWidth={38} track={111} pos={48} value="4" unit=":1" valueWidth={24} tick />
            <Slider label="Knee size:" labelWidth={38} track={111} pos={10} value="0.0" unit="dB" valueWidth={24} />
            <DetectorRow>
                <DetectorLabel>Detector input:</DetectorLabel>
                <SelectBox $width={127}>
                    Main Input L+R
                    <span>⌄</span>
                </SelectBox>
            </DetectorRow>
            <Slider label="Lowpass" labelWidth={41} track={106} pos={99} value="20000" unit="Hz" valueWidth={30} />
            <Slider label="Highpass" labelWidth={41} track={106} pos={11} value="0" unit="Hz" valueWidth={30} />
            <Slider label="RMS size" labelWidth={41} track={106} pos={27} value="3.8" unit="ms" valueWidth={30} />
        </MainColumn>
        <ReductionMeter>
            <MeterValue $top={18}>-4.0</MeterValue>
            <MeterValue $top={48}>-0-</MeterValue>
            <MeterValue $top={100}>-12-</MeterValue>
            <MeterValue $top={173}>-4.4</MeterValue>
        </ReductionMeter>
        <OutputColumn>
            <OutputTitle>Output mix</OutputTitle>
            <OutputBody>
                <OutputMeter>
                    <OutputPeak>-0.6</OutputPeak>
                    {['-6-', '-12-', '-18-', '-24-', '-30-', '-36-', '-42-', '-48-', '-54-', '-60-'].map(l => (
                        <OutputTick key={l}>{l}</OutputTick>
                    ))}
                </OutputMeter>
                <MixChannels>
                    <MixChannel>
                        <MixLabel>Wet:</MixLabel>
                        <MixTrough>
                            <MixThumb $top={29} />
                        </MixTrough>
                        <ValueBox $width={26} $height={16} $center>
                            +0.0
                        </ValueBox>
                    </MixChannel>
                    <MixChannel>
                        <MixLabel>Dry:</MixLabel>
                        <MixTrough>
                            <MixDash />
                            <MixThumb $top={104} />
                        </MixTrough>
                        <ValueBox $width={26} $height={16} $center>
                            -inf
                        </ValueBox>
                    </MixChannel>
                </MixChannels>
            </OutputBody>
            <OutputChecks>
                <Check label="Preview filter" />
                <Check label="Auto make-up" checked />
                <LimitCheck>
                    <Check label="Limit output" />
                </LimitCheck>
            </OutputChecks>
        </OutputColumn>
    </PluginPanel>
);

const App: FC = () => (
    <>
        <GlobalStyle />
        <Page>
            <TitleBar>
                <TitleText>orir por ti, la cima, y otra [modified] - REAPER v6.08/x64 - Registered to Miguel Gomez (Commercial license)</TitleText>
                <WindowButtons>
                    <MinimizeGlyph />
                    <RestoreGlyph />
                </WindowButtons>
            </TitleBar>
            <MenuBar>
                <MenuItem $width={23}>Edit</MenuItem>
                <MenuItem $width={27}>View</MenuItem>
                <MenuItem $width={29}>Insert</MenuItem>
                <MenuItem $width={27}>Item</MenuItem>
                <MenuItem $width={29}>Track</MenuItem>
                <MenuItem $width={38}>Options</MenuItem>
                <MenuItem $width={38}>Actions</MenuItem>
                <MenuItem $width={33}>Help</MenuItem>
                <span>[Change media item selection]</span>
                <AudioStatus>[96kHz 24bit WAV : 16/32ch 1024spls ~16/26ms .</AudioStatus>
            </MenuBar>
            <TopStrip>
                <EditMix>
                    Edit
                    <br />
                    mix
                </EditMix>
                <svg width="14" height="14" viewBox="0 0 14 14" fill="none" stroke="#8a8a8a" strokeWidth="1.3">
                    <circle cx="7" cy="6.5" r="5.5" />
                    <path d="M8 11 L12 13" />
                </svg>
            </TopStrip>
            <Main>
                <LeftPanel>
                    <ToolbarArea>
                        <ToolButton><ToolGlyph kind="up" /></ToolButton>
                        <ToolButton><ToolGlyph kind="down" /></ToolButton>
                        <ToolButton><Info size={14} /></ToolButton>
                        <ToolButton><Undo2 size={15} strokeWidth={2.6} /></ToolButton>
                        <ToolButton><Redo2 size={15} strokeWidth={2.6} /></ToolButton>
                        <ToolButton><ToolGlyph kind="metro" /></ToolButton>
                        <ToolButton $active><ToolGlyph kind="link" /></ToolButton>
                        <ToolButton><ToolGlyph kind="dots" /></ToolButton>
                        <ToolButton $active><ToolGlyph kind="snap" /></ToolButton>
                        <ToolButton $active><ToolGlyph kind="grid" /></ToolButton>
                        <ToolButton><ToolGlyph kind="loop" /></ToolButton>
                        <ToolButton><Lock size={13} fill="currentColor" /></ToolButton>
                    </ToolbarArea>
                    {TRACKS.map((track, i) => (
                        <TrackStrip key={i} track={track} height={LANE_HEIGHTS[i]} />
                    ))}
                </LeftPanel>
                <Arrange>
                    <TealStrip />
                    <ScrollStrip />
                    <Ruler>
                        {RULER_MARKS.map(mark => (
                            <RulerMark key={mark.bar}>
                                <BarLabel>{mark.bar}</BarLabel>
                                <TimeLabel>{mark.time}</TimeLabel>
                            </RulerMark>
                        ))}
                    </Ruler>
                    <Lanes>
                        <Lane $height={LANE_HEIGHTS[0]} $bg="#131313">
                            <Clip $left={0} $width={1025}>
                                <ClipHead height={10} />
                                <ClipBody $height={68} $color="#5f3a90">
                                    <Waveform bumps={PURPLE_WAVE} x0={255} width={1025} height={68} centers={[17, 51]} color="#1d1028" base={3.4} />
                                </ClipBody>
                            </Clip>
                        </Lane>
                        <Lane $height={LANE_HEIGHTS[1]} $bg="#131313" />
                        <Lane $height={LANE_HEIGHTS[2]} $bg="#404040">
                            <Clip $left={0} $width={1025}>
                                <ClipBody $height={81} $color="transparent">
                                    <Waveform bumps={GRAY_WAVE} x0={255} width={1025} height={81} centers={[43]} color="#707070" base={0.6} />
                                </ClipBody>
                            </Clip>
                        </Lane>
                        <Lane $height={LANE_HEIGHTS[3]} $bg="#333">
                            <Clip $left={0} $width={1025}>
                                <ClipHead height={11} name="<<04-200103_2104.wav" />
                                <ClipBody $height={69} $color="#6b75ff">
                                    <Waveform bumps={BLUE_WAVE} x0={255} width={1025} height={69} centers={[34]} color="#262b55" />
                                </ClipBody>
                            </Clip>
                            <Clip $left={428} $width={597}>
                                <ClipHead height={11} name="04-200103_2106.wav" />
                            </Clip>
                            <Crossfade width="20" height="69" viewBox="0 0 20 69">
                                <rect width="20" height="69" fill="#6a3fc0" opacity="0.45" />
                                <path d="M0 0 C6 30 12 50 20 69 M20 0 C14 30 8 50 0 69" fill="none" stroke="#a02060" strokeWidth="0.9" />
                            </Crossfade>
                        </Lane>
                        <Lane $height={LANE_HEIGHTS[4]} $bg="#3a3a3a">
                            <Clip $left={355} $width={147}>
                                <ClipHead height={11} name="05-200103_2107.w..." />
                                <ClipBody $height={70} $color="#4a7a6d" $corner>
                                    <Waveform bumps={TEAL_A} x0={610} width={147} height={70} centers={[34]} color="#19322c" />
                                </ClipBody>
                            </Clip>
                            <Clip $left={593} $width={432}>
                                <ClipHead height={11} name="05-200103_2107.wav" />
                                <ClipBody $height={70} $color="#4a7a6d" $corner>
                                    <Waveform bumps={TEAL_B} x0={848} width={432} height={70} centers={[34]} color="#19322c" />
                                </ClipBody>
                            </Clip>
                        </Lane>
                        <Lane $height={LANE_HEIGHTS[5]} $bg="#3a3a3a">
                            <Clip $left={635} $width={390}>
                                <ClipHead height={11} name="06-200103_2122.wav" />
                                <ClipBody $height={69} $color="#a4ffc9" $corner>
                                    <Waveform bumps={MINT_WAVE} x0={890} width={390} height={69} centers={[34]} color="#2b4a3c" />
                                </ClipBody>
                            </Clip>
                        </Lane>
                        <Lane $height={LANE_HEIGHTS[6]} $bg="#131313" />
                        <GridLines />
                    </Lanes>
                    <PlayheadCap />
                    <Cursor $left={602} $top={40} $color="#3f9c86" />
                    <Cursor $left={651} $top={57} $color="#b5ad55" />
                </Arrange>
            </Main>
            <StatusRow>
                <StatusText>[input] Analog 1</StatusText>
                <TinyDot />
                <TinyOval />
                <StatusRight>
                    <TinyDot />+
                </StatusRight>
            </StatusRow>
            <Transport>
                <SkipIcon>
                    <svg width="9" height="9" viewBox="0 0 9 9" fill="currentColor">
                        <path d="M0 0 L6 4.5 L0 9 Z" />
                        <rect x="7" y="0" width="1.6" height="9" />
                    </svg>
                </SkipIcon>
                <RoundButton $bg="#8a3427" $size={21}>
                    <RefreshCw size={11} />
                </RoundButton>
                <RoundButton $bg="#13c79a" $size={20}>
                    <Play size={10} fill="#fff" color="#fff" />
                </RoundButton>
                <RoundButton $bg="#1e1e1e" $size={16}>
                    <RefreshCw size={9} />
                </RoundButton>
                <StopPause>
                    <Square size={8} fill="currentColor" />
                    <Pause size={9} fill="currentColor" />
                </StopPause>
                <Clock>52.1.15 / 0:21.889</Clock>
                <PlayState>[Playing]</PlayState>
                <TransportRight>
                    <SelectionCell $width={49}>Selection:</SelectionCell>
                    <SelectionCell $width={55}>110.2.52</SelectionCell>
                    <SelectionCell $width={60}>111.1.32</SelectionCell>
                    <SelectionCell $width={41}>0.0.80</SelectionCell>
                    <InfoBox $width={34}>
                        <span>BPM</span>
                        <span>140</span>
                    </InfoBox>
                    <InfoBox $width={25}>2/8</InfoBox>
                    <InfoBox $width={38}>
                        <GlobalLabel>GLOBAL</GlobalLabel>
                        <span>none</span>
                    </InfoBox>
                    <BigKnob />
                </TransportRight>
            </Transport>
            <Watermark $serif>USIC</Watermark>
            <Watermark>COMPRESORES</Watermark>
            <FxWindow>
                <FxTitle>
                    <span>FX: Track 3 (folder)</span>
                    <svg width="9" height="11" viewBox="0 0 9 11" fill="none" stroke="#bbb">
                        <path d="M1 4 H8 M2.5 1 H6.5 V4 M4.5 4 V11" />
                    </svg>
                </FxTitle>
                <FxMenu>
                    <span>FX</span>
                    <span>Edit</span>
                    <span>Options</span>
                </FxMenu>
                <FxBody>
                    <FxListColumn>
                        <FxList>
                            <FxListItem>
                                <CheckBox $strong>✓</CheckBox>
                                VST: ReaComp (Cockos)
                            </FxListItem>
                        </FxList>
                        <FxListButtons>
                            <PlainButton $width={30}>Add</PlainButton>
                            <PlainButton $width={33}>Remove</PlainButton>
                        </FxListButtons>
                        <CpuText>0.0%/0.0% CPU 0/0 spls</CpuText>
                    </FxListColumn>
                    <FxMain>
                        <PresetNameRow>
                            <PresetName />
                            <PlainButton $width={12} $height={15}>...</PlainButton>
                        </PresetNameRow>
                        <PresetToolbar>
                            <SelectBox $width={189}>
                                No preset
                                <span>⌄</span>
                            </SelectBox>
                            <PlainButton $width={11} $height={14}>+</PlainButton>
                            <PlainButton $width={30} $height={14}>Param</PlainButton>
                            <PlainButton $width={50} $height={14}>2/4 in 2 out</PlainButton>
                            <PlainButton $width={17} $height={14}>UI</PlainButton>
                            <MiniKnob />
                            <CheckBox>✓</CheckBox>
                        </PresetToolbar>
                        <ReaComp />
                    </FxMain>
                </FxBody>
            </FxWindow>
        </Page>
    </>
);

export default App;
